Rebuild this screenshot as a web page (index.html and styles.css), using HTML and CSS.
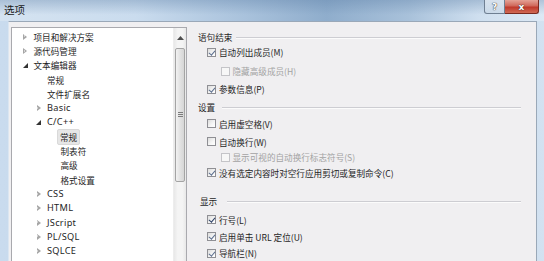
FILE: index.html
```html
<!DOCTYPE html>
<html lang="zh">
<head>
<meta charset="utf-8">
<title>选项</title>
<link rel="stylesheet" href="styles.css">
</head>
<body>
<div class="window">
  <div class="titlebar">
    <span class="title">选项</span>
    <div class="caption-buttons">
      <span class="cap-btn help">?</span>
      <span class="cap-btn close">x</span>
    </div>
  </div>
  <div class="frame">
    <div class="client">
      <div class="tree">
        <ul class="tree-list">
          <li class="node lvl0"><span class="arrow collapsed"></span><span class="label">项目和解决方案</span></li>
          <li class="node lvl0"><span class="arrow collapsed"></span><span class="label">源代码管理</span></li>
          <li class="node lvl0"><span class="arrow expanded"></span><span class="label">文本编辑器</span></li>
          <li class="node lvl1"><span class="arrow"></span><span class="label">常规</span></li>
          <li class="node lvl1"><span class="arrow"></span><span class="label">文件扩展名</span></li>
          <li class="node lvl1"><span class="arrow collapsed"></span><span class="label latin">Basic</span></li>
          <li class="node lvl1"><span class="arrow expanded"></span><span class="label latin">C/C++</span></li>
          <li class="node lvl2"><span class="arrow"></span><span class="label selected">常规</span></li>
          <li class="node lvl2"><span class="arrow"></span><span class="label">制表符</span></li>
          <li class="node lvl2"><span class="arrow"></span><span class="label">高级</span></li>
          <li class="node lvl2"><span class="arrow"></span><span class="label">格式设置</span></li>
          <li class="node lvl1"><span class="arrow collapsed"></span><span class="label latin">CSS</span></li>
          <li class="node lvl1"><span class="arrow collapsed"></span><span class="label latin">HTML</span></li>
          <li class="node lvl1"><span class="arrow collapsed"></span><span class="label latin">JScript</span></li>
          <li class="node lvl1"><span class="arrow collapsed"></span><span class="label latin">PL/SQL</span></li>
          <li class="node lvl1"><span class="arrow collapsed"></span><span class="label latin">SQLCE</span></li>
          <li class="node lvl1"><span class="arrow collapsed"></span><span class="label latin">Transact-SQL</span></li>
        </ul>
        <div class="scrollbar">
          <span class="sb-up">
            <svg width="7" height="4" viewBox="0 0 7 4"><path d="M0 4 L3.5 0 L7 4 Z" fill="#4d4d4d"/></svg>
          </span>
          <span class="sb-thumb"><span class="grip"></span></span>
        </div>
      </div>
      <div class="options">
        <div class="group-head h1"><span>语句结束</span><span class="rule"></span></div>
        <label class="check c1"><span class="box on"></span><span>自动列出成员(M)</span></label>
        <label class="check sub disabled c2"><span class="box"></span><span>隐藏高级成员(H)</span></label>
        <label class="check c3"><span class="box on"></span><span>参数信息(P)</span></label>

        <div class="group-head h2"><span>设置</span><span class="rule"></span></div>
        <label class="check c4"><span class="box"></span><span>启用虚空格(V)</span></label>
        <label class="check c5"><span class="box"></span><span>自动换行(W)</span></label>
        <label class="check sub disabled c6"><span class="box"></span><span>显示可视的自动换行标志符号(S)</span></label>
        <label class="check c7"><span class="box on"></span><span>没有选定内容时对空行应用剪切或复制命令(C)</span></label>

        <div class="group-head h3"><span>显示</span><span class="rule"></span></div>
        <label class="check c8"><span class="box on dark"></span><span>行号(L)</span></label>
        <label class="check c9"><span class="box on"></span><span>启用单击 URL 定位(U)</span></label>
        <label class="check c10"><span class="box on"></span><span>导航栏(N)</span></label>
      </div>
    </div>
  </div>
</div>
</body>
</html>
```
FILE: styles.css
```css
* { box-sizing: border-box; }
html, body { margin: 0; padding: 0; }
body {
  width: 544px;
  height: 261px;
  overflow: hidden;
  font-family: "Noto Sans CJK SC", "Noto Sans", sans-serif;
  font-size: 8.6px;
  color: #1e1e1e;
  background: #cddcec;
}
.window {
  display: flex;
  flex-direction: column;
  height: 261px;
  background: linear-gradient(to right, #c9dbee 0%, #c3d6ea 30%, #b7cce2 60%, #c6d8eb 85%, #d3e2f1 100%);
}
.titlebar {
  height: 21px;
  flex: none;
  display: flex;
  justify-content: space-between;
  align-items: flex-start;
  background:
    linear-gradient(to bottom, rgba(90,125,165,0.35) 0%, rgba(255,255,255,0) 70%),
    linear-gradient(to right, #d5e3f1 0%, #cadcee 25%, #a9c2dc 45%, #8fadcc 60%, #a8c1da 75%, #cfdfef 88%, #dde9f5 100%);
}
.title {
  font-size: 10.5px;
  line-height: 20px;
  padding-left: 4px;
  color: #1a1a1a;
}
.caption-buttons {
  display: flex;
  margin-right: 5px;
}
.cap-btn {
  height: 14px;
  display: flex;
  align-items: center;
  justify-content: center;
  font-family: "DejaVu Sans", sans-serif;
  font-weight: bold;
  font-size: 9px;
  color: #fff;
  text-shadow: 0 0 1px #333, 0 0 1px #333;
  border: 1px solid #6f7f92;
  border-top: none;
}
.help {
  width: 21px;
  border-radius: 0 0 0 3px;
  background: linear-gradient(to bottom, rgba(255,255,255,0.55), rgba(200,215,230,0.6));
}
.close {
  width: 34px;
  border-left: none;
  border-color: #7a2a20;
  border-radius: 0 0 3px 0;
  background: linear-gradient(to bottom, #e4a296 0%, #d0685a 45%, #c0392b 55%, #d06a55 100%);
}
.frame {
  flex: 1;
  display: flex;
  padding: 0 7px 0 8px;
  min-height: 0;
}
.client {
  flex: 1;
  display: flex;
  background: #f0eff1;
  border-top: 1px solid #9aa8b8;
  border-left: 1px solid #dbe6f1;
  border-right: 1px solid #9aa8b8;
  padding: 5px 0 0 2px;
  min-height: 0;
  overflow: hidden;
}
.tree {
  width: 176px;
  flex: none;
  display: flex;
  background: #fff;
  border: 1px solid #a9a9ae;
  border-bottom: none;
}
.tree-list {
  list-style: none;
  margin: 0;
  padding: 1.5px 0 0 0;
  flex: 1;
  overflow: hidden;
}
.node {
  height: 14.3px;
  display: flex;
  align-items: center;
  white-space: nowrap;
}
.lvl0 { padding-left: 8px; }
.lvl1 { padding-left: 21.5px; }
.lvl2 { padding-left: 35px; }
.arrow {
  width: 9px;
  height: 9px;
  flex: none;
  position: relative;
}
.arrow.collapsed::before {
  content: "";
  position: absolute;
  left: 3px;
  top: 1.5px;
  border-style: solid;
  border-width: 3px 0 3px 4px;
  border-color: transparent transparent transparent #a6a6a6;
}
.arrow.collapsed::after {
  content: "";
  position: absolute;
  left: 3.8px;
  top: 3.2px;
  border-style: solid;
  border-width: 1.3px 0 1.3px 1.8px;
  border-color: transparent transparent transparent #fff;
}
.arrow.expanded::before {
  content: "";
  position: absolute;
  left: 2.5px;
  top: 2.5px;
  border-style: solid;
  border-width: 0 0 5px 5px;
  border-color: transparent transparent #333 transparent;
}
.label {
  margin-left: 3.5px;
  padding: 0 1px;
  line-height: 14px;
}
.label.latin {
  font-family: "Noto Sans", "Noto Sans CJK SC", sans-serif;
  font-size: 9.2px;
  letter-spacing: 0.3px;
}
.label.selected {
  background: #e6e6e6;
  border: 1px solid #d9d9d9;
  border-radius: 2px;
  padding: 0 2px;
  margin-left: 1px;
  line-height: 14px;
}
.scrollbar {
  width: 13px;
  flex: none;
  display: flex;
  flex-direction: column;
  align-items: center;
  background: linear-gradient(to right, #e8e8e8, #f4f4f4 30%, #f4f4f4 70%, #e8e8e8);
  border-left: 1px solid #ededed;
}
.sb-up {
  height: 20px;
  display: flex;
  align-items: center;
  justify-content: center;
}
.sb-thumb {
  width: 10px;
  height: 134px;
  border: 1px solid #a4a4a4;
  border-radius: 2px;
  background: linear-gradient(to right, #f2f2f2, #e2e2e2 50%, #d6d6d6);
  display: flex;
  align-items: flex-start;
  justify-content: center;
  padding-top: 63px;
}
.grip {
  width: 5px;
  height: 5px;
  background: repeating-linear-gradient(to bottom, #7c7c7c 0 1px, transparent 1px 2px);
}
.options {
  flex: 1;
  display: flex;
  flex-direction: column;
  padding: 3.5px 15px 0 11px;
}
.group-head {
  height: 14px;
  display: flex;
  align-items: center;
  gap: 4px;
  white-space: nowrap;
}
.rule {
  flex: 1;
  height: 2px;
  border-top: 1px solid #cdcdd2;
  border-bottom: 1px solid #fbfbfb;
  margin-top: 1px;
}
.h3 { padding-left: 2px; }
.h2 .rule { margin-left: 3px; }
.h3 .rule { margin-left: 6px; }
.check {
  height: 16px;
  display: flex;
  align-items: center;
  padding-left: 9px;
  white-space: nowrap;
}
.check.sub { padding-left: 22.5px; }
.check.disabled { color: #a3a3a3; }
.box {
  width: 9px;
  height: 9px;
  flex: none;
  margin-right: 3px;
  border: 1px solid #8f8f94;
  background: linear-gradient(135deg, #dcdcdc, #f6f6f6 60%, #ffffff);
  position: relative;
}
.disabled .box { border-color: #c4c4c8; background: #f7f7f7; }
.box.on::after {
  content: "";
  position: absolute;
  left: 2.2px;
  top: 0px;
  width: 2.5px;
  height: 5px;
  border-right: 1.6px solid #5d6f8f;
  border-bottom: 1.6px solid #5d6f8f;
  transform: rotate(40deg);
}
.box.on.dark::after { border-color: #2c3f66; }
.c1 { margin-top: 0.5px; }
.c2 { margin-top: 3.5px; }
.c3 { margin-top: 2.5px; }
.h2 { margin-top: 3.5px; }
.c4 { margin-top: 2px; }
.c5 { margin-top: 2.5px; }
.c6 { margin-top: 0; }
.c7 { margin-top: 0.3px; }
.h3 { margin-top: 14.2px; }
.c8 { margin-top: 4px; }
.c9 { margin-top: 1.5px; }
.c10 { margin-top: 1px; }
```
